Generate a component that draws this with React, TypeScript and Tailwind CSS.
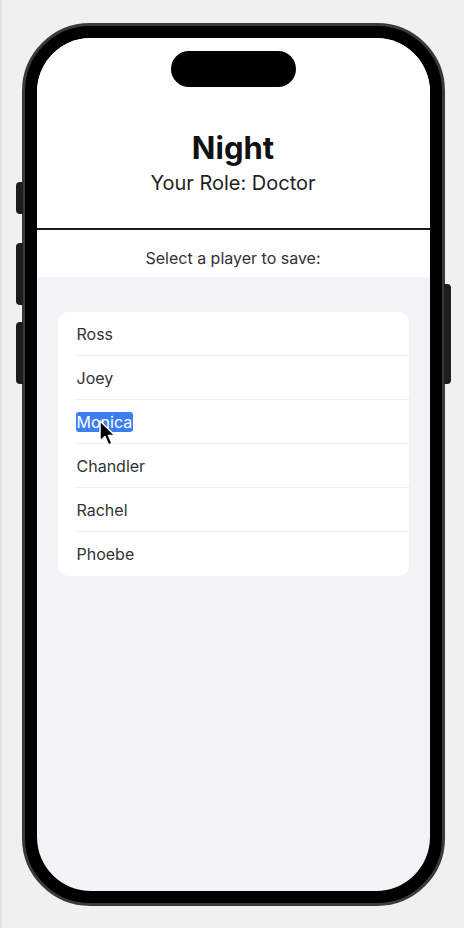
import React from "react";

const players = ["Ross", "Joey", "Monica", "Chandler", "Rachel", "Phoebe"];

function Cursor() {
  return (
    <svg
      className="pointer-events-none absolute left-[22px] top-[8px]"
      width="20"
      height="28"
      viewBox="0 0 20 28"
    >
      <path
        d="M2 1 L2 21 L7 16.5 L10.5 25 L14 23.5 L10.5 15.5 L17 15.5 Z"
        fill="#000"
        stroke="#fff"
        strokeWidth="1.5"
        strokeLinejoin="round"
      />
    </svg>
  );
}

export default function App() {
  return (
    <div className="flex h-[928px] w-[464px] justify-center border-l-2 border-[#e2e2e2] bg-[#f0f0f0] pt-[23px] font-['Inter',sans-serif]">
      <div className="relative h-[883px] w-[423px]">
        {/* side buttons */}
        <div className="absolute left-[-6px] top-[159px] h-[32px] w-[7px] rounded-l-sm bg-[#1c1c1c]" />
        <div className="absolute left-[-6px] top-[220px] h-[62px] w-[7px] rounded-l-sm bg-[#1c1c1c]" />
        <div className="absolute left-[-6px] top-[299px] h-[62px] w-[7px] rounded-l-sm bg-[#1c1c1c]" />
        <div className="absolute right-[-6px] top-[261px] h-[100px] w-[7px] rounded-r-sm bg-[#1c1c1c]" />

        <div className="h-full w-full rounded-[68px] border-[3px] border-[#3a3a3a] bg-black p-[12px]">
          <div className="flex h-full w-full flex-col overflow-hidden rounded-[54px] bg-[#f2f2f7]">
            <div className="flex h-[190px] flex-col items-center bg-white pt-[13px]">
              <div className="h-[36px] w-[125px] rounded-full bg-black" />
              <h1 className="mt-[42px] text-[31px] leading-[38px] font-bold text-[#111]">Night</h1>
              <p className="mt-[3px] text-[20px] leading-[26px] text-[#1f1f1f]">Your Role: Doctor</p>
            </div>
            <div className="h-[2px] bg-[#1a1a1a]" />
            <div className="flex h-[47px] items-center justify-center bg-white pt-[8px] text-[16px] text-[#333]">
              Select a player to save:
            </div>
            <div className="px-[21px] pt-[35px]">
              <ul className="rounded-[10px] bg-white">
                {players.map((name, i) => (
                  <li key={name} className="pl-[19px]">
                    <div
                      className={`flex h-[44px] items-center text-[16px] text-[#333] ${
                        i < players.length - 1 ? "border-b border-[#ececec]" : ""
                      }`}
                    >
                      {name === "Monica" ? (
                        <span className="relative -ml-px rounded-[3px] bg-[#3b7ff0] px-px leading-[20px] text-white">
                          {name}
                          <Cursor />
                        </span>
                      ) : (
                        name
                      )}
                    </div>
                  </li>
                ))}
              </ul>
            </div>
          </div>
        </div>
      </div>
    </div>
  );
}
